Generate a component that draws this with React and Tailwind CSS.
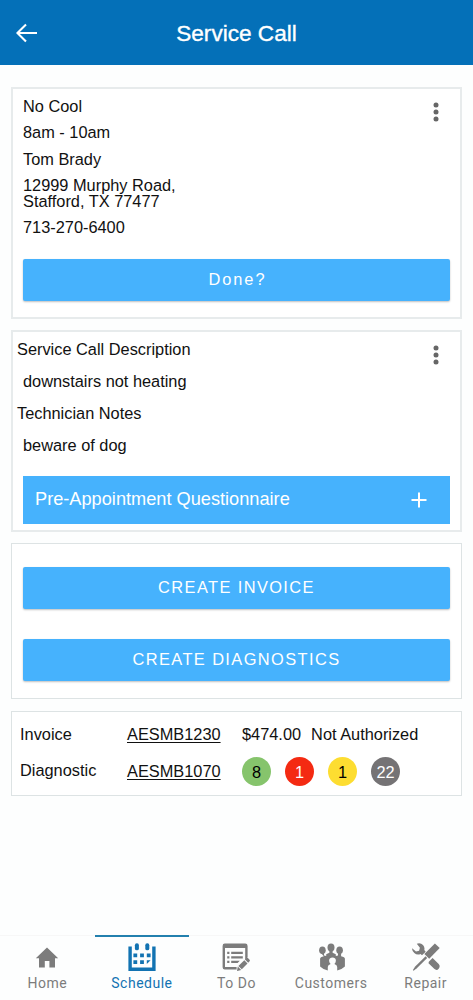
import clsx from "clsx";

const ratings = [
  { value: 8, className: "bg-[#86c46c] text-black" },
  { value: 1, className: "bg-[#f42a12] text-white" },
  { value: 1, className: "bg-[#fddd31] text-black" },
  { value: 22, className: "bg-[#757375] text-white" },
];

function HomeIcon() {
  return (
    <svg viewBox="0 0 28 28" className="w-7 h-7" fill="currentColor">
      <path d="M14 4.4 2.8 15.2H6v9.3h5.8v-6.6h4.6v6.6H22v-9.3h3.2z" />
    </svg>
  );
}

function CalendarIcon() {
  return (
    <svg viewBox="0 0 28 28" className="w-7 h-7" fill="currentColor">
      <path d="M.4 3.4h3.4v21h20.4v-21h3.4V28H.4z" />
      <rect x="6.9" y="0.3" width="4" height="7" rx="1.9" />
      <rect x="17.3" y="0.3" width="4" height="7" rx="1.9" />
      <path d="M5.4 10.4h3.8v3.8H5.4zM12.1 10.4h3.8v3.8h-3.8zM18.8 10.4h3.8v3.8h-3.8zM5.4 17.2h3.8V21H5.4zM12.1 17.2h3.8V21h-3.8zM18.8 17.2h3.8L18.8 21z" />
    </svg>
  );
}

function TodoIcon() {
  return (
    <svg viewBox="0 0 28 28" className="w-7 h-7" fill="currentColor">
      <path d="M2.8.5h20.4q2.4 0 2.4 2.4v11.4L23.2 17V5H3v19h11.6v2.4H2.8q-2.2 0-2.2-2.2V2.9Q.6.5 2.8.5z" />
      <path d="M5.2 8.8h2.2V11H5.2zM9.2 8.8h11.6V11H9.2zM5.2 13.2h2.2v2.2H5.2zM9.2 13.2h11.6v2.2H9.2zM5.2 17.8h2.2V20H5.2zM9.2 17.8h8.6L15.6 20H9.2z" />
      <path d="m23 16.5 1.4-1.4q.8-.7 1.5 0l1.7 1.7q.7.8 0 1.5l-1.4 1.4zM22.3 17.2l3.2 3.2-5.7 5.9-3.4-3.4zM15.8 23.5l3.4 3.4-4.2 1.2z" />
    </svg>
  );
}

function CustomersIcon() {
  return (
    <svg viewBox="0 0 28 28" className="w-7 h-7" fill="currentColor">
      <ellipse cx="14" cy="4.5" rx="3.5" ry="4" />
      <ellipse cx="5.4" cy="7.2" rx="3.3" ry="3.8" />
      <ellipse cx="22.6" cy="7.2" rx="3.3" ry="3.8" />
      <path d="M3.9 10H7v2.6l2.2.4v-1.7l3.2-1.6V7h3.2v2.7l3.2 1.6V13l2.2-.4V10h3.1v3.2q3.8.9 3.8 2.6v7.6q-2.7 2.8-7.7 4v-3.5q0-1.8-2.8-3 1.7-1.6 1.5-3.6-.4-2.8-3.4-2.8t-3.4 2.8q-.2 2 1.5 3.6-2.8 1.2-2.8 3v3.5q-5-1.2-7.7-4v-7.6q0-1.7 3.8-2.6z" />
    </svg>
  );
}

function RepairIcon() {
  return (
    <svg viewBox="0 0 28 28" className="w-7 h-7" fill="currentColor">
      <path d="M22.9.4 27.7 5.1 17.2 15.8l-4.8-4.7z" />
      <path d="m13.6 13.3 1.6 1.6L4.8 25.2 1.6 27.8l-.7-.7L3.2 23.4z" />
      <path d="m16.8 18.7 3.8-3.8 6.1 6.2q1.3 1.3.9 2.9-.6 1.9-2.4 2.9-1.7.3-3-1.1l-5.7-5.6z" />
      <path d="M4.8.7Q8.6-.5 11 2q2 2 1.3 5.1l1.4 1.6-3.7 3.6-1.5-1.3Q5 12.4 2.3 9.9-.2 7.4.1 5.2l3.9 3.2 3.1-.7.8-3z" />
    </svg>
  );
}

const tabs = [
  { name: "Home", icon: HomeIcon },
  { name: "Schedule", icon: CalendarIcon, active: true },
  { name: "To Do", icon: TodoIcon },
  { name: "Customers", icon: CustomersIcon },
  { name: "Repair", icon: RepairIcon },
];

function Card({ className, children }) {
  return (
    <section className={clsx("relative bg-white", className)}>
      {children}
    </section>
  );
}

function MoreButton() {
  return (
    <button className="absolute right-[21px] top-[13px]" aria-label="More options">
      <svg viewBox="0 0 6 20" className="w-[6px] h-5" fill="#666">
        <circle cx="3" cy="3.1" r="2.5" />
        <circle cx="3" cy="10" r="2.5" />
        <circle cx="3" cy="16.9" r="2.5" />
      </svg>
    </button>
  );
}

function ActionButton({ className, children }) {
  return (
    <button
      className={clsx(
        "block w-full h-[42px] pb-[2px] rounded-[2px] bg-[#46b2fd] text-white text-[16.4px] text-center shadow-[0_1px_2px_rgba(0,0,0,0.25)]",
        className
      )}
    >
      {children}
    </button>
  );
}

export default function App() {
  return (
    <div className="h-[1000px] w-[473px] flex flex-col overflow-hidden bg-[#fdfefe] text-[#111] font-['Liberation_Sans',Arial,sans-serif] text-[16.35px]">
      <header className="h-[65px] shrink-0 grid grid-cols-[60px_1fr_60px] items-center bg-[#0470b8] text-white">
        <button className="pl-4" aria-label="Back">
          <svg viewBox="0 0 22 20" className="w-[22px] h-5" fill="none" stroke="currentColor" strokeWidth="2.1">
            <path d="M21 10H1.6M10 1.4 1.4 10l8.6 8.6" />
          </svg>
        </button>
        <h1 className="text-center text-[22.6px] leading-[26px] pt-[2px] [-webkit-text-stroke:0.35px_white]">Service Call</h1>
      </header>

      <main className="flex-1 px-[11px] pt-[22px] flex flex-col">
        {/* Appointment */}
        <Card className="h-[232px] border-2 border-[#e7ebec] px-[10px] pt-[9px] flex flex-col">
          <MoreButton />
          <div className="flex flex-col gap-[10px] leading-[16.3px]">
            <p>No Cool</p>
            <p>8am - 10am</p>
            <p>Tom Brady</p>
            <p>
              12999 Murphy Road,
              <br />
              Stafford, TX 77477
            </p>
            <p>713-270-6400</p>
          </div>
          <ActionButton className="mt-auto mb-4 tracking-[1.9px] pl-[2px]">Done?</ActionButton>
        </Card>

        {/* Description and notes */}
        <Card className="mt-[11px] h-[202px] border-2 border-[#e7ebec] pt-[8px] flex flex-col">
          <MoreButton />
          <div className="flex flex-col gap-[14px] px-[4px] leading-[18px]">
            <p>Service Call Description</p>
            <p className="pl-[6px]">downstairs not heating</p>
            <p>Technician Notes</p>
            <p className="pl-[6px]">beware of dog</p>
          </div>
          <button className="mt-auto mx-[10px] mb-[6px] h-12 pl-3 pr-[23px] flex items-center justify-between bg-[#46b2fd] text-white text-[18.2px]">
            Pre-Appointment Questionnaire
            <svg viewBox="0 0 16 16" className="w-4 h-4" stroke="currentColor" strokeWidth="2">
              <path d="M8 .5v15M.5 8h15" />
            </svg>
          </button>
        </Card>

        {/* Create actions */}
        <Card className="mt-[11px] h-[156px] border-[1.5px] border-[#dde3e4] px-[11px] pt-[23px] flex flex-col gap-[30px]">
          <ActionButton className="tracking-[1.4px]">CREATE INVOICE</ActionButton>
          <ActionButton className="tracking-[1.4px]">CREATE DIAGNOSTICS</ActionButton>
        </Card>

        {/* Documents */}
        <Card className="mt-[12px] h-[85px] border-[1.5px] border-[#dde3e4] pl-[8px] pt-[12px]">
          <div className="grid grid-cols-[107px_115px_1fr] leading-[20px]">
            <span>Invoice</span>
            <a className="underline underline-offset-2">AESMB1230</a>
            <span className="flex gap-[10px]">
              <span>$474.00</span>
              <span>Not Authorized</span>
            </span>
          </div>
          <div className="mt-[13px] grid grid-cols-[107px_115px_1fr] items-center leading-[20px]">
            <span className="-mt-[3px]">Diagnostic</span>
            <a className="-mt-px underline underline-offset-2">AESMB1070</a>
            <span className="flex gap-[14px]">
              {ratings.map((rating, i) => (
                <span
                  key={i}
                  className={clsx("w-[29px] h-[29px] rounded-full flex items-center justify-center", rating.className)}
                >
                  {rating.value}
                </span>
              ))}
            </span>
          </div>
        </Card>
      </main>

      <nav className="h-[65px] shrink-0 grid grid-cols-5 border-t border-[#f7f7f7] font-[Roboto,sans-serif]">
        {tabs.map((tab) => (
          <button
            key={tab.name}
            className={clsx(
              "-mt-px pt-[6px] flex flex-col items-center border-t-2 text-[14px] leading-[18px] tracking-[0.5px]",
              tab.active ? "border-[#2380ae] text-[#1273b2]" : "border-transparent text-[#7c7c7c]"
            )}
          >
            <tab.icon />
            <span className="mt-[3px]">{tab.name}</span>
          </button>
        ))}
      </nav>
    </div>
  );
}
